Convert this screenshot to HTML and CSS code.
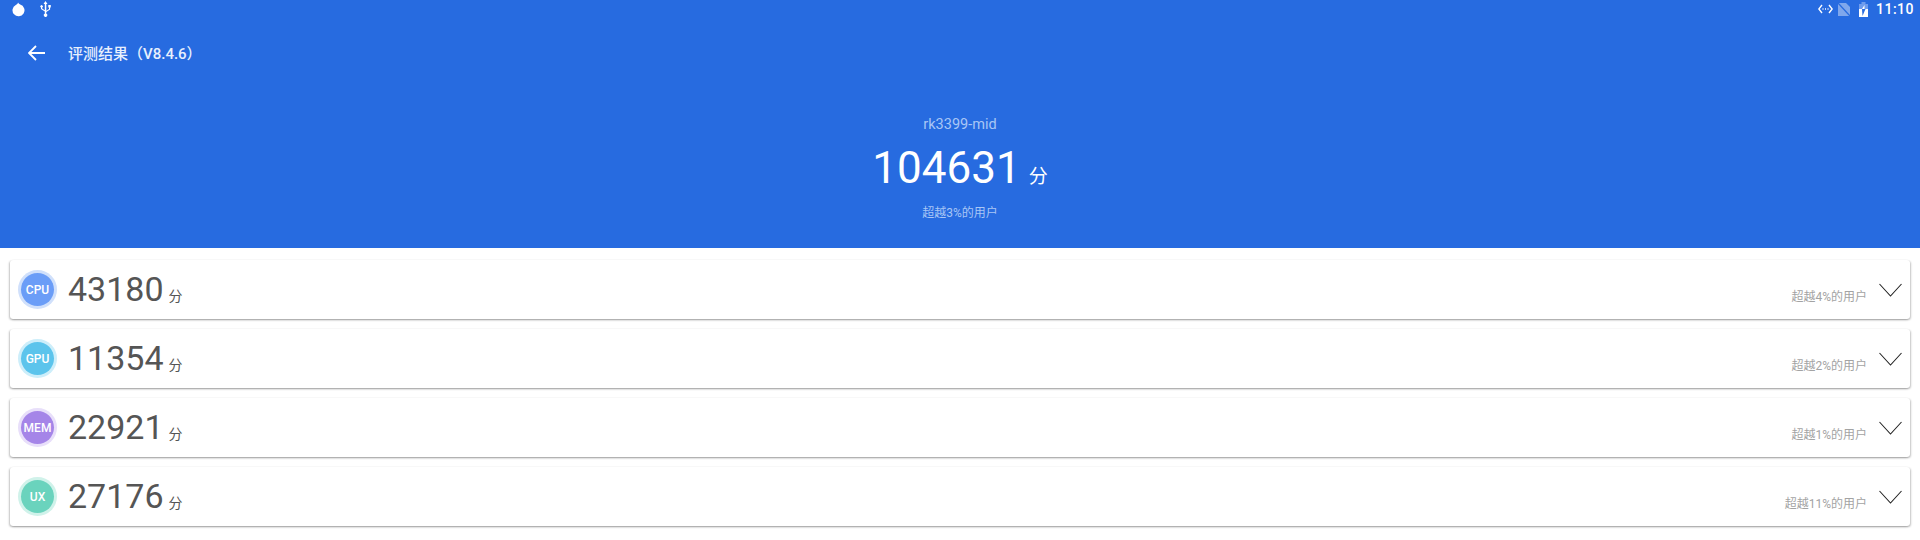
FILE: index.html
```html
<!DOCTYPE html>
<html lang="zh-CN">
<head>
    <meta charset="UTF-8">
    <title>评测结果</title>
    <link rel="stylesheet" href="styles.css">
</head>
<body>

    <header class="hero">
        <div class="status-bar">
            <div class="status-left">
                <svg width="14" height="15" viewBox="0 0 14 15"><path d="M6 .5c.6 1 1.300 1.700 2.200 2A6 6 0 1 1 3.800 2.900C4.900 2.600 5.700 1.800 6 .5z" fill="#fff"/></svg>
                <svg width="11" height="16" viewBox="0 0 11 16"><path d="M5.500 0l2 3H6.300v6.800L9 8V6.500H8.300V4h2.500v2.500h-.7v2L6.300 11v1.700a1.700 1.700 0 1 1-1.500 0V10.500L1 8V6.600a1.300 1.300 0 1 1 1.200 0v.9l2.600 1.700V3H3.500z" fill="#fff"/></svg>
            </div>
            <div class="status-right">
                <svg class="icon-data" width="15" height="10" viewBox="0 0 15 10"><path d="M4 1L.8 5 4 9M11 1l3.200 4L11 9" fill="none" stroke="#fff" stroke-width="1.400"/><path d="M4.500 5h1M7 5h1M9.500 5h1" stroke="#fff" stroke-width="1.400"/></svg>
                <svg class="icon-sim" width="12" height="13" viewBox="0 0 12 13"><path d="M0 0h8l4 4v9H0z" fill="#7fa7ec"/><path d="M0 0l12 13" stroke="#276be0" stroke-width="1.300"/></svg>
                <svg class="icon-battery" width="9" height="15" viewBox="0 0 9 15"><path d="M2.500 0h4v2h-4zM0 2h9v5H0z" fill="#6f9ced"/><path d="M0 7h9v8H0z" fill="#fff"/><path d="M5.500 3L3 7h2.500z" fill="#fff"/><path d="M5.500 7L3 7l.5 7 3-7z" fill="#276be0"/></svg>
                <span class="clock">11:10</span>
            </div>
        </div>

        <div class="toolbar">
            <svg class="back" width="18" height="16" viewBox="0 0 18 16"><path d="M8 1L1 8l7 7M1 8h16" fill="none" stroke="#fff" stroke-width="1.800"/></svg>
            <span class="title">评测结果（V8.4.6）</span>
        </div>

        <div class="summary">
            <div class="device">rk3399-mid</div>
            <div class="total">104631<span class="total-unit">分</span></div>
            <div class="rank">超越3%的用户</div>
        </div>
    </header>

    <main class="list">
        <div class="card">
            <div class="badge badge-cpu">CPU</div>
            <span class="score">43180</span><span class="unit">分</span>
            <span class="percent">超越4%的用户</span>
            <svg class="chevron" width="23" height="14" viewBox="0 0 23 14"><path d="M.5 1L11.500 13 22.500 1" fill="none" stroke="#222" stroke-width="1.100"/></svg>
        </div>
        <div class="card">
            <div class="badge badge-gpu">GPU</div>
            <span class="score">11354</span><span class="unit">分</span>
            <span class="percent">超越2%的用户</span>
            <svg class="chevron" width="23" height="14" viewBox="0 0 23 14"><path d="M.5 1L11.500 13 22.500 1" fill="none" stroke="#222" stroke-width="1.100"/></svg>
        </div>
        <div class="card">
            <div class="badge badge-mem">MEM</div>
            <span class="score">22921</span><span class="unit">分</span>
            <span class="percent">超越1%的用户</span>
            <svg class="chevron" width="23" height="14" viewBox="0 0 23 14"><path d="M.5 1L11.500 13 22.500 1" fill="none" stroke="#222" stroke-width="1.100"/></svg>
        </div>
        <div class="card">
            <div class="badge badge-ux">UX</div>
            <span class="score">27176</span><span class="unit">分</span>
            <span class="percent">超越11%的用户</span>
            <svg class="chevron" width="23" height="14" viewBox="0 0 23 14"><path d="M.5 1L11.500 13 22.500 1" fill="none" stroke="#222" stroke-width="1.100"/></svg>
        </div>
    </main>

</body>
</html>
```

FILE: styles.css
```css
html, body {
    margin: 0;
    padding: 0;
}

body {
    width: 1920px;
    height: 540px;
    overflow: hidden;
    background-color: #fff;
    font-family: Roboto, "Noto Sans CJK SC", sans-serif;
}

.hero {
    height: 248px;
    background-color: #276be0;
    color: #fff;
}

.status-bar {
    height: 18px;
    display: flex;
    justify-content: space-between;
    align-items: center;
    padding: 0 6px 0 12px;
}

.status-left {
    display: flex;
    align-items: center;
    gap: 14px;
}

.status-right {
    display: flex;
    align-items: center;
}

.icon-sim {
    margin-left: 5px;
}

.icon-battery {
    margin-left: 9px;
}

.clock {
    margin-left: 8px;
    font-size: 14px;
    font-weight: 500;
    letter-spacing: 0.5px;
}

.toolbar {
    height: 68px;
    display: flex;
    align-items: center;
    padding-left: 28px;
}

.back {
    margin-top: 2px;
}

.title {
    margin-left: 22px;
    font-size: 15px;
    font-weight: 500;
    color: #e8f0fd;
}

.summary {
    display: flex;
    flex-direction: column;
    align-items: center;
    padding-top: 30px;
}

.device {
    font-size: 14.5px;
    line-height: 18px;
    color: #a9c6f5;
}

.total {
    margin-top: 9px;
    font-size: 44px;
    line-height: 50px;
}

.total-unit {
    margin-left: 8px;
    font-size: 19px;
}

.rank {
    margin-top: 3px;
    font-size: 12px;
    line-height: 16px;
    color: #a9c6f5;
}

.list {
    display: flex;
    flex-direction: column;
    gap: 10px;
    padding: 12px 10px 0;
}

.card {
    height: 59px;
    display: flex;
    align-items: center;
    padding: 0 8px 0 11px;
    background-color: #fff;
    border-radius: 3px;
    box-shadow: -1px 1px 2px rgba(0, 0, 0, 0.22), 1px 1px 2px rgba(0, 0, 0, 0.22), 0 0 1px rgba(0, 0, 0, 0.06);
}

.badge {
    width: 33px;
    height: 33px;
    border-radius: 50%;
    display: flex;
    align-items: center;
    justify-content: center;
    color: #fff;
    font-size: 12px;
    font-weight: 500;
}

.badge-cpu { background-color: #6b9df7; box-shadow: 0 0 0 3px #d0e0fb; }
.badge-gpu { background-color: #5cc4ec; box-shadow: 0 0 0 3px #cdeefa; }
.badge-mem { background-color: #a585e8; box-shadow: 0 0 0 3px #e8dffa; }
.badge-ux { background-color: #6ad3bd; box-shadow: 0 0 0 3px #d0f2ea; }

.score {
    margin-left: 14px;
    margin-bottom: 1px;
    font-size: 34px;
    color: #555;
}

.unit {
    margin-left: 5px;
    margin-top: 10px;
    font-size: 14px;
    color: #555;
}

.percent {
    margin-left: auto;
    margin-top: 12px;
    font-size: 12px;
    color: #a3a3a3;
}

.chevron {
    margin-left: 12px;
}
```
